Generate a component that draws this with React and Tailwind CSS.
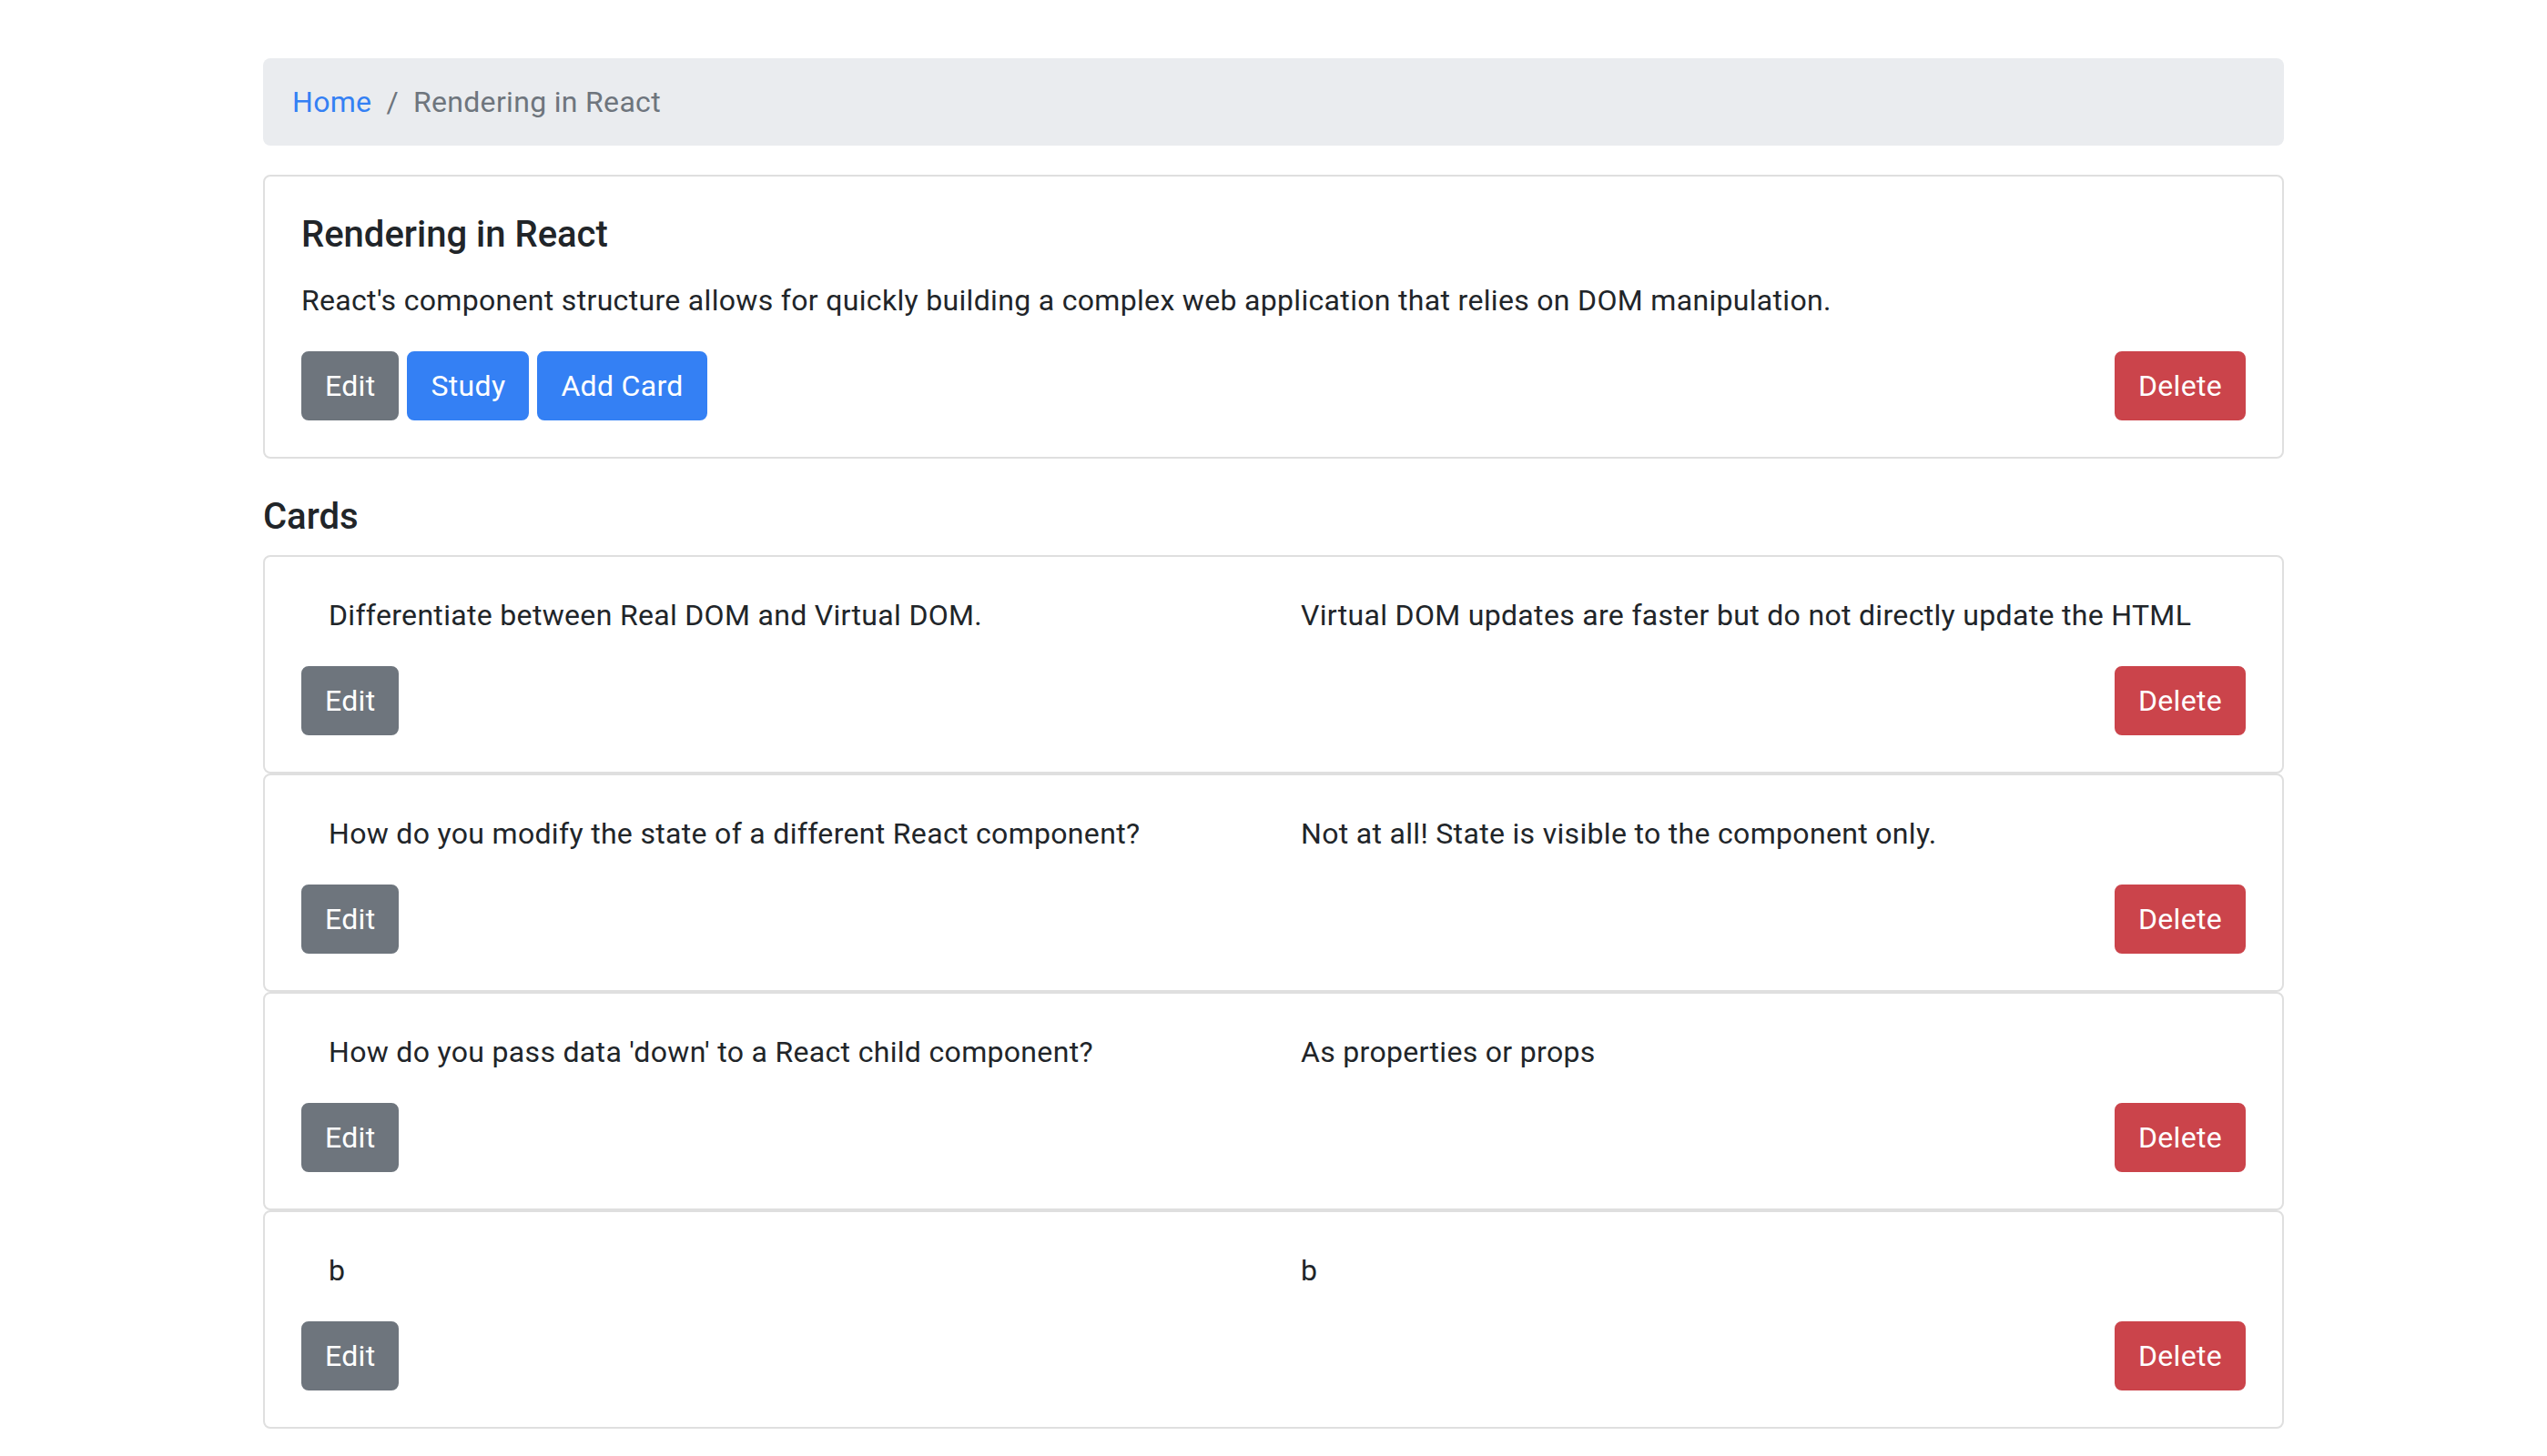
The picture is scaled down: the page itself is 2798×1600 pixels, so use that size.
import React from 'react';

const cards = [
  { front: 'Differentiate between Real DOM and Virtual DOM.', back: 'Virtual DOM updates are faster but do not directly update the HTML' },
  { front: 'How do you modify the state of a different React component?', back: 'Not at all! State is visible to the component only.' },
  { front: "How do you pass data 'down' to a React child component?", back: 'As properties or props' },
  { front: 'b', back: 'b' },
];

const Btn = ({ color, children }) => {
  const colors = {
    gray: 'bg-[#6e757d] border-[#6e757d]',
    blue: 'bg-[#3480f4] border-[#3480f4]',
    red: 'bg-[#cb444b] border-[#cb444b]',
  };
  return (
    <button className={`h-[76px] px-[24px] rounded-[8px] border-2 text-[32px] leading-[48px] tracking-[0.01em] text-white ${colors[color]}`}>
      {children}
    </button>
  );
};

export default function App() {
  return (
    <div className="min-h-screen bg-white text-[#212529]" style={{ fontFamily: 'Roboto, "Noto Sans", sans-serif' }}>
      <div className="w-[2220px] mx-auto pt-[64px] pb-[40px]">
        {/* Breadcrumb */}
        <nav className="h-[96px] px-[32px] mb-[32px] rounded-[8px] bg-[#eaecef] flex items-center text-[32px] leading-[48px] tracking-[0.01em]">
          <a href="#" className="text-[#3480f4]">Home</a>
          <span className="px-[16px] text-[#6e757d]">/</span>
          <span className="text-[#6e757d]">Rendering in React</span>
        </nav>

        {/* Deck */}
        <div className="border-2 border-[#dfdfdf] rounded-[8px] p-[40px]">
          <h2 className="text-[40px] font-medium leading-[48px] mb-[24px]">Rendering in React</h2>
          <p className="text-[32px] leading-[48px] mb-[32px] tracking-[0.01em]">
            React's component structure allows for quickly building a complex web application that relies on DOM manipulation.
          </p>
          <div className="flex justify-between">
            <div className="flex gap-[9px]">
              <Btn color="gray">Edit</Btn>
              <Btn color="blue">Study</Btn>
              <Btn color="blue">Add Card</Btn>
            </div>
            <Btn color="red">Delete</Btn>
          </div>
        </div>

        <h3 className="mt-[40px] mb-[18px] text-[40px] font-medium leading-[48px]">Cards</h3>

        {cards.map((c, i) => (
          <div key={i} className="border-2 border-[#dfdfdf] rounded-[8px] p-[40px]">
            <div className="grid grid-cols-2 text-[32px] leading-[48px] mb-[32px] tracking-[0.01em]">
              <p className="px-[30px]">{c.front}</p>
              <p className="px-[30px]">{c.back}</p>
            </div>
            <div className="flex justify-between">
              <Btn color="gray">Edit</Btn>
              <Btn color="red">Delete</Btn>
            </div>
          </div>
        ))}
      </div>
    </div>
  );
}
